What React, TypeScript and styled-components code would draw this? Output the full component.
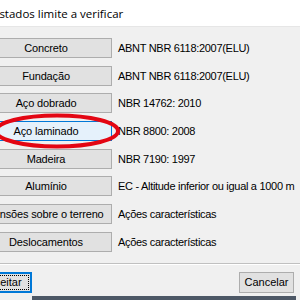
import React from "react";
import styled, { createGlobalStyle } from "styled-components";

const GlobalStyle = createGlobalStyle`
  html, body {
    margin: 0;
    padding: 0;
  }
  body {
    width: 300px;
    height: 300px;
    overflow: hidden;
    background: #f0f0f0;
    font-family: "Liberation Sans", Arial, sans-serif;
    font-size: 11px;
    color: #000;
  }
`;

const Window = styled.div`
  width: 300px;
  height: 300px;
  display: flex;
  flex-direction: column;
  overflow: hidden;
  background: #f0f0f0;
`;

const Header = styled.div`
  height: 26px;
  flex: none;
  display: flex;
  align-items: center;
  background: #fff;
  border-bottom: 1px solid #e6e6e6;
`;

const Title = styled.span`
  margin-left: -7px;
  font-family: "Open Sans", "Liberation Sans", sans-serif;
  font-size: 11.5px;
  white-space: nowrap;
  color: #000;
`;

const Content = styled.div`
  padding-top: 11px;
`;

const Grid = styled.div`
  display: grid;
  grid-template-columns: 132px auto;
  grid-auto-rows: 20px;
  column-gap: 6px;
  row-gap: 7.7px;
  align-items: center;
  margin-left: -20px;
`;

const Cell = styled.div`
  position: relative;
  height: 20px;
`;

const StateButton = styled.button<{ $active?: boolean }>`
  width: 100%;
  height: 20px;
  margin: 0;
  padding: 0;
  box-sizing: border-box;
  font-family: "Liberation Sans", Arial, sans-serif;
  font-size: 11px;
  letter-spacing: -0.15px;
  color: #000;
  white-space: nowrap;
  overflow: hidden;
  background: ${(p) => (p.$active ? "#e5f1fb" : "#e1e1e1")};
  border: 1px solid ${(p) => (p.$active ? "#0078d7" : "#adadad")};
`;

const Norm = styled.span`
  white-space: nowrap;
  font-size: 11px;
  letter-spacing: -0.3px;
`;

const Mark = styled.svg`
  position: absolute;
  left: 15px;
  top: -8px;
  overflow: visible;
  pointer-events: none;
`;

const Separator = styled.div`
  margin-top: 11px;
  height: 0;
  border-top: 1px solid #c0c0c0;
  border-bottom: 1px solid #fff;
`;

const Footer = styled.div`
  display: flex;
  justify-content: space-between;
  margin-top: 7px;
  margin-left: -23px;
  padding-right: 6px;
`;

const DialogButton = styled.button<{ $default?: boolean }>`
  width: 55px;
  height: 21px;
  margin: 0;
  padding: 0;
  box-sizing: border-box;
  font-family: "Liberation Sans", Arial, sans-serif;
  font-size: 11px;
  color: #000;
  background: #e1e1e1;
  border: ${(p) => (p.$default ? "2px solid #0078d7" : "1px solid #adadad")};
  outline: ${(p) => (p.$default ? "1px dotted #000" : "none")};
  outline-offset: -4px;
`;

const Edge = styled.div`
  margin-top: auto;
  height: 4px;
  background: linear-gradient(to right, #f0f0f0 0 32px, #4d5866 32px 296px, #f0f0f0 296px);
`;

const rows = [
  { label: "Concreto", norm: "ABNT NBR 6118:2007(ELU)" },
  { label: "Fundação", norm: "ABNT NBR 6118:2007(ELU)" },
  { label: "Aço dobrado", norm: "NBR 14762: 2010" },
  { label: "Aço laminado", norm: "NBR 8800: 2008", active: true },
  { label: "Madeira", norm: "NBR 7190: 1997" },
  { label: "Alumínio", norm: "EC - Altitude inferior ou igual a 1000 m" },
  { label: "Tensões sobre o terreno", norm: "Ações características" },
  { label: "Deslocamentos", norm: "Ações características" },
];

export default function App() {
  return (
    <Window>
      <GlobalStyle />
      <Header>
        <Title>Estados limite a verificar</Title>
      </Header>
      <Content>
        <Grid>
          {rows.map((r) => (
            <React.Fragment key={r.label}>
              <Cell>
                <StateButton $active={r.active}>{r.label}</StateButton>
                {r.active && (
                  <Mark width="124" height="36" viewBox="0 0 124 36">
                    <ellipse
                      cx="62"
                      cy="18"
                      rx="61"
                      ry="15.5"
                      fill="none"
                      stroke="#e30613"
                      strokeWidth="4"
                    />
                  </Mark>
                )}
              </Cell>
              <Norm>{r.norm}</Norm>
            </React.Fragment>
          ))}
        </Grid>
      </Content>
      <Separator />
      <Footer>
        <DialogButton $default>Aceitar</DialogButton>
        <DialogButton>Cancelar</DialogButton>
      </Footer>
      <Edge />
    </Window>
  );
}
